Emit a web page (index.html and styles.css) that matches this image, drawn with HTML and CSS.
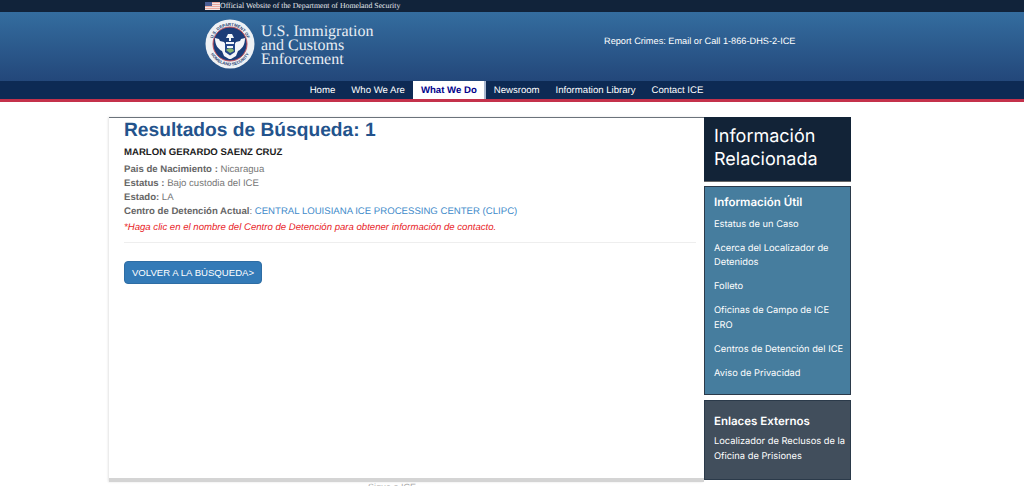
FILE: index.html
```html
<!DOCTYPE html>
<html lang="es">
<head>
    <meta charset="UTF-8">
    <meta name="viewport" content="width=device-width, initial-scale=1.0">
    <title>Resultados de Búsqueda</title>
    <link rel="stylesheet" href="styles.css">
</head>
<body>
    <div class="top-bar">
        <div class="top-inner">
            <svg class="flag" width="15" height="8" viewBox="0 0 15 8">
                <rect width="15" height="8" fill="#e9a9a0"/>
                <rect y="1" width="15" height="1" fill="#f4e6e4"/>
                <rect y="3" width="15" height="1" fill="#f4e6e4"/>
                <rect y="5" width="15" height="1" fill="#f4e6e4"/>
                <rect y="7" width="15" height="1" fill="#f4e6e4"/>
                <rect width="7" height="4" fill="#4a5f96"/>
            </svg>
            <span>Official Website of the Department of Homeland Security</span>
        </div>
    </div>

    <header class="header">
        <div class="header-inner">
            <div class="brand">
                <svg class="seal" width="50" height="50" viewBox="0 0 50 50">
                    <defs>
                        <path id="seal-top" d="M7 25a18 18 0 0 1 36 0"/>
                        <path id="seal-bottom" d="M3.500 25a21.500 21.500 0 0 0 43 0"/>
                    </defs>
                    <circle cx="25" cy="25" r="24.500" fill="#eef1f5"/>
                    <circle cx="25" cy="25" r="17" fill="#1b3c78" stroke="#c9535c" stroke-width="1"/>
                    <text class="seal-text"><textPath href="#seal-top" startOffset="50%" text-anchor="middle">U.S. DEPARTMENT OF</textPath></text>
                    <text class="seal-text"><textPath href="#seal-bottom" startOffset="50%" text-anchor="middle">HOMELAND SECURITY</textPath></text>
                    <path d="M10 19l4 1 1 2 4 1 2 3v-3h8v3l2-3 4-1 1-2 4-1c0 7-3 11-7 13l-2 5-5 3h-2l-5-3-2-5c-4-2-7-6-7-13z" fill="#f4f6fa"/>
                    <path d="M23 15h4l1 2 1 2h-3v3h-2v-3h-3l1-2z" fill="#f4f6fa"/>
                    <path d="M20 25h10v8l-5 3.500-5-3.500z" fill="#24478a"/>
                    <path d="M21 31c2-2 5-2 7-1l1 2-4 2z" fill="#86b56e"/>
                    <path d="M22 27h6v2h-6z" fill="#f4f6fa"/>
                </svg>
                <div class="agency">U.S. Immigration<br>and Customs<br>Enforcement</div>
            </div>
            <div class="report">Report Crimes: Email or Call 1-866-DHS-2-ICE</div>
        </div>
    </header>

    <nav class="nav">
        <a href="#">Home</a>
        <a href="#">Who We Are</a>
        <a href="#" class="active">What We Do</a>
        <a href="#">Newsroom</a>
        <a href="#">Information Library</a>
        <a href="#">Contact ICE</a>
    </nav>

    <div class="page">
        <main class="content">
            <h1>Resultados de Búsqueda: 1</h1>
            <h2>MARLON GERARDO SAENZ CRUZ</h2>
            <ul class="facts">
                <li><b>Pais de Nacimiento :</b> Nicaragua</li>
                <li><b>Estatus :</b> Bajo custodia del ICE</li>
                <li><b>Estado:</b> LA</li>
                <li><b>Centro de Detención Actual</b>: <a href="#">CENTRAL LOUISIANA ICE PROCESSING CENTER (CLIPC)</a></li>
            </ul>
            <p class="note">*Haga clic en el nombre del Centro de Detención para obtener información de contacto.</p>
            <hr>
            <button class="back-button">VOLVER A LA BÚSQUEDA&gt;</button>
        </main>
        <aside class="sidebar">
            <div class="side-title">Información Relacionada</div>
            <div class="side-box useful">
                <h3>Información Útil</h3>
                <a href="#">Estatus de un Caso</a>
                <a href="#">Acerca del Localizador de Detenidos</a>
                <a href="#">Folleto</a>
                <a href="#">Oficinas de Campo de ICE ERO</a>
                <a href="#">Centros de Detención del ICE</a>
                <a href="#">Aviso de Privacidad</a>
            </div>
            <div class="side-box external">
                <h3>Enlaces Externos</h3>
                <a href="#">Localizador de Reclusos de la Oficina de Prisiones</a>
            </div>
        </aside>
    </div>
    <div class="footer-text">Sigue a ICE</div>
</body>
</html>
```

FILE: styles.css
```css
html, body {
    height: 486px;
    overflow: hidden;
}
body {
    margin: 0;
    background-color: #fff;
    font-family: "Liberation Sans", Arial, sans-serif;
    text-rendering: geometricPrecision;
}
a {
    text-decoration: none;
}

/* top strip */
.top-bar {
    height: 12px;
    background-color: #11233a;
}
.top-inner {
    display: flex;
    align-items: center;
    height: 11px;
    padding-left: 205px;
    font-family: "Liberation Serif", serif;
    font-size: 7.800px;
    color: #e6e9ee;
}

/* header */
.header {
    height: 69px;
    background: linear-gradient(#346d9f, #23477a);
}
.header-inner {
    display: flex;
    align-items: center;
    box-sizing: border-box;
    width: 614px;
    height: 100%;
    margin-left: 205px;
    padding-bottom: 5px;
}
.brand {
    display: flex;
    align-items: center;
    gap: 6px;
    width: 399px;
}
.seal {
    flex: none;
}
.seal-text {
    font-family: "Liberation Sans", sans-serif;
    font-size: 4.200px;
    font-weight: bold;
    fill: #24406f;
}
.agency {
    padding-top: 4px;
    font-family: "Liberation Serif", serif;
    font-size: 16px;
    line-height: 14px;
    color: #e8edf3;
}
.report {
    margin-bottom: 6px;
    font-size: 9.200px;
    color: #fff;
}

/* nav */
.nav {
    display: flex;
    justify-content: center;
    height: 18px;
    padding-right: 11px;
    background-color: #0d2a54;
    border-bottom: 3px solid #c4314b;
}
.nav a {
    padding: 0 8px;
    font-size: 9.600px;
    line-height: 20px;
    color: #fff;
}
.nav a.active {
    padding-right: 7px;
    color: #00008b;
    font-weight: bold;
    background-color: #fff;
    border-right: 2px solid #a9b7cf;
}

/* main */
.page {
    display: flex;
    align-items: flex-start;
    width: 742px;
    margin: 15px 0 0 109px;
}
.content {
    box-sizing: border-box;
    width: 595px;
    height: 365px;
    padding: 0 8px 0 15px;
    border-top: 1px solid #6b737b;
    border-bottom: 4px solid #d4d4d4;
    box-shadow: -1px 0 2px #e4e4e4;
}
h1 {
    margin: 2px 0 0;
    font-size: 19.200px;
    line-height: 21px;
    color: #23538c;
}
h2 {
    margin: 5px 0 4px;
    font-size: 9.600px;
    line-height: 13px;
    color: #1c1c1c;
}
.facts {
    margin: 0;
    padding: 0;
    list-style: none;
    font-size: 9.600px;
    line-height: 14px;
    color: #777;
}
.facts b {
    color: #666;
}
.facts a {
    color: #428bca;
}
.note {
    margin: 2px 0 0;
    font-size: 9.600px;
    line-height: 14px;
    font-style: italic;
    color: #e8231f;
}
hr {
    margin: 7px 0 18px;
    border: none;
    border-top: 1px solid #eee;
}
.back-button {
    display: block;
    width: 138px;
    height: 23px;
    padding: 0;
    font-family: inherit;
    font-size: 9.600px;
    color: #fff;
    background-color: #337ab7;
    border: 1px solid #2e6da4;
    border-radius: 4px;
}

/* sidebar */
.sidebar {
    display: flex;
    flex-direction: column;
    width: 147px;
}
.side-title {
    box-sizing: border-box;
    height: 65px;
    padding: 8px 10px 6px;
    font-family: Inter, sans-serif;
    font-size: 18px;
    line-height: 23px;
    color: #fff;
    background-color: #122337;
    border-bottom: 1px solid #666;
}
.side-box {
    box-sizing: border-box;
    padding: 0 4px 0 9px;
    font-family: Inter, sans-serif;
    color: #fff;
    border: 1px solid #2b3a4a;
}
.side-box h3 {
    margin: 0;
    font-size: 11.500px;
    font-weight: 600;
}
.side-box a {
    display: block;
    font-size: 9.300px;
    line-height: 14.500px;
    color: #fff;
}
.useful {
    height: 209px;
    margin-top: 4px;
    padding-top: 8px;
    background-color: #467d9e;
}
.useful h3 {
    line-height: 15px;
    margin-bottom: 7.500px;
}
.useful a {
    margin-bottom: 9.500px;
}
.external {
    height: 80px;
    margin-top: 5px;
    padding-top: 13px;
    background-color: #414e5c;
}
.external h3 {
    line-height: 15px;
    margin-bottom: 6px;
}

.footer-text {
    padding-left: 368px;
    font-size: 9px;
    line-height: 10px;
    color: #aaa;
}
```
